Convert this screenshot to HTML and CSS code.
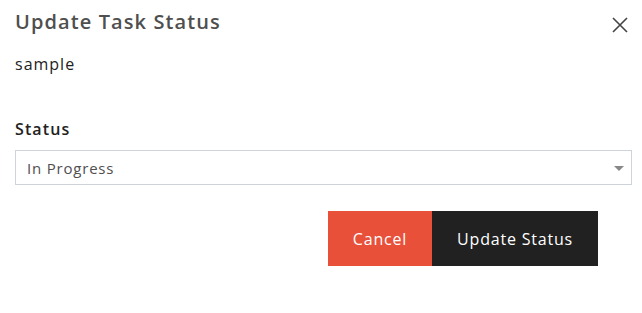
FILE: index.html
```html
<!DOCTYPE html>
<html lang="en">
<head>
    <meta charset="UTF-8">
    <meta name="viewport" content="width=device-width, initial-scale=1.0">
    <title>Update Task Status</title>
    <link rel="stylesheet" href="styles.css">
</head>
<body>

    <div class="modal">
        <div class="modal-header">
            <h2 class="modal-title">Update Task Status</h2>
            <button class="close-btn" aria-label="Close">
                <svg width="16" height="16" viewBox="0 0 16 16">
                    <path d="M1 1L15 15M15 1L1 15" stroke="#444" stroke-width="1.6" fill="none"/>
                </svg>
            </button>
        </div>

        <p class="task-name">sample</p>

        <div class="form-group">
            <label for="status">Status</label>
            <div class="select-wrapper">
                <select id="status">
                    <option>Not Started</option>
                    <option selected>In Progress</option>
                    <option>Completed</option>
                </select>
                <span class="select-arrow"></span>
            </div>
        </div>

        <div class="modal-footer">
            <button class="btn btn-cancel">Cancel</button>
            <button class="btn btn-submit">Update Status</button>
        </div>
    </div>

</body>
</html>
```

FILE: styles.css
```css
:root {
    --text-dark: #222;
    --text-gray: #4f4f4f;
    --border-color: #ced4da;
    --danger-color: #e8503a;
    --dark-color: #212121;
}

body {
    margin: 0;
    font-family: "Open Sans", "Noto Sans", Arial, sans-serif;
    background-color: #fff;
    color: var(--text-dark);
}

.modal {
    width: 642px;
    height: 313px;
    box-sizing: border-box;
    padding: 8px 10px 0 15px;
}

.modal-header {
    display: flex;
    justify-content: space-between;
    align-items: center;
}

.modal-title {
    margin: 0;
    font-size: 20px;
    font-weight: 600;
    color: var(--text-gray);
    line-height: 28px;
    letter-spacing: 1.1px;
}

.close-btn {
    background: none;
    border: none;
    padding: 0;
    margin: 6px 4px 0 0;
    cursor: pointer;
    display: flex;
}

.task-name {
    margin: 17px 0 0 0;
    font-size: 16px;
    font-weight: 500;
    line-height: 22px;
    letter-spacing: 1px;
    color: var(--text-dark);
}

.form-group {
    margin-top: 43px;
}

label {
    display: block;
    font-size: 16px;
    font-weight: 600;
    line-height: 22px;
    margin-bottom: 10px;
    letter-spacing: 1.1px;
}

.select-wrapper {
    position: relative;
}

select {
    width: 617px;
    height: 35px;
    box-sizing: border-box;
    padding: 0 11px;
    border: 1px solid var(--border-color);
    border-radius: 0;
    background: #fff;
    font-family: inherit;
    font-size: 15px;
    color: var(--text-gray);
    appearance: none;
    -webkit-appearance: none;
    letter-spacing: 0.8px;
}

.select-arrow {
    position: absolute;
    left: 599px;
    top: 16px;
    width: 0;
    height: 0;
    border-left: 5px solid transparent;
    border-right: 5px solid transparent;
    border-top: 5px solid #888;
    pointer-events: none;
}

.modal-footer {
    display: flex;
    justify-content: flex-end;
    margin-top: 26px;
    padding-right: 34px;
}

.btn {
    height: 55px;
    border: none;
    border-radius: 0;
    padding: 0 25px;
    font-family: inherit;
    font-size: 16px;
    font-weight: 500;
    color: #fff;
    cursor: pointer;
    letter-spacing: 0.8px;
}

.btn-cancel {
    background-color: var(--danger-color);
}

.btn-submit {
    background-color: var(--dark-color);
}
```
